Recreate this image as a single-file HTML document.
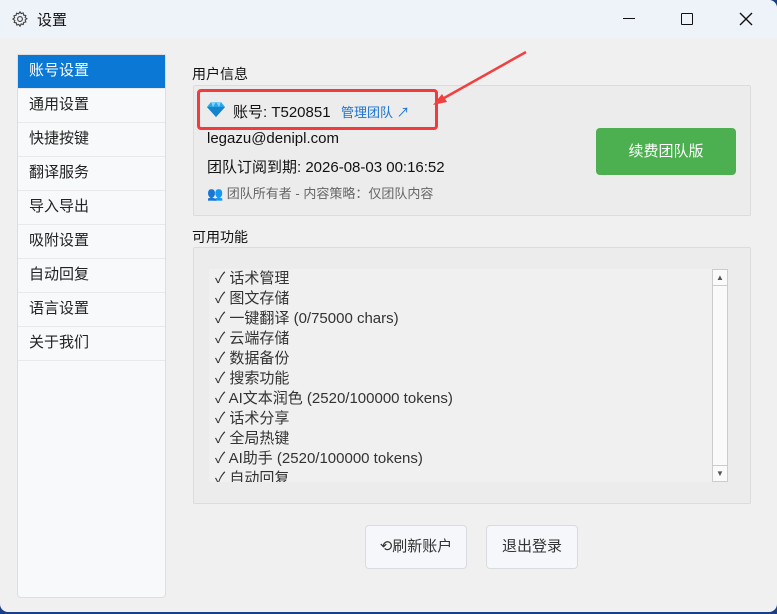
<!DOCTYPE html>
<html><head><meta charset="utf-8"><style>
*{margin:0;padding:0;box-sizing:border-box}
body{width:777px;height:614px;background:#1a3f8a;font-family:"Liberation Sans","Noto Sans CJK SC",sans-serif;overflow:hidden;position:relative}
.win{position:absolute;left:0;top:0;width:777px;height:612px;background:#f0f0f0;border-radius:0 8px 8px 8px;overflow:hidden}
.tb{position:absolute;left:0;top:0;width:777px;height:38px;background:#eef2f9}
.tb .t{position:absolute;left:37px;top:9px;font-size:15px;color:#111}
.side{position:absolute;left:17px;top:54px;width:149px;height:544px;background:#f8f9fb;border:1px solid #dedede;border-radius:0 0 4px 4px}
.it{height:34px;line-height:32px;padding-left:11px;font-size:15px;color:#222;border-bottom:1px solid #e9e9e9}
.it.sel{background:#0a78d4;color:#fff}
.a{position:absolute}
.lbl{font-size:14px;color:#111}
.box{background:#ececec;border:1px solid #dcdcdc;border-radius:2px}
.btn{background:#f5f7fb;border:1px solid #d9dbe0;border-radius:4px;font-size:15px;color:#333;text-align:center}
.list div{height:20px;line-height:20px;font-size:15px;color:#333}
</style></head><body>
<div class="win">
<div class="tb">
<svg class="a" style="left:11px;top:10px" width="18" height="18" viewBox="0 0 24 24" fill="none" stroke="#444" stroke-width="1.5"><circle cx="12" cy="12" r="3.2"/><path d="M12 2.5l1.6 2.3 2.7-.8.6 2.8 2.8.6-.8 2.7 2.3 1.6-2.3 1.6.8 2.7-2.8.6-.6 2.8-2.7-.8L12 21.5l-1.6-2.3-2.7.8-.6-2.8-2.8-.6.8-2.7L2.5 12l2.3-1.6-.8-2.7 2.8-.6.6-2.8 2.7.8z"/></svg>
<div class="t">设置</div>
<div class="a" style="left:623px;top:18px;width:12px;height:1px;background:#111"></div>
<div class="a" style="left:681px;top:13px;width:12px;height:12px;border:1.5px solid #111;border-radius:1px"></div>
<svg class="a" style="left:739px;top:12px" width="14" height="14" viewBox="0 0 14 14" stroke="#111" stroke-width="1.4"><path d="M1 1L13 13M13 1L1 13"/></svg>
</div>
<div class="side">
<div class="it sel">账号设置</div><div class="it">通用设置</div><div class="it">快捷按键</div><div class="it">翻译服务</div><div class="it">导入导出</div><div class="it">吸附设置</div><div class="it">自动回复</div><div class="it">语言设置</div><div class="it">关于我们</div>
</div>
<div class="a lbl" style="left:192px;top:64px">用户信息</div>
<div class="a box" style="left:193px;top:85px;width:558px;height:131px"></div>
<div class="a" style="left:197px;top:89px;width:241px;height:41px;border:3px solid #f03c3c;border-radius:4px"></div>
<svg class="a" style="left:430px;top:48px" width="100" height="60"><path d="M7 54L96 4" stroke="#f04040" stroke-width="2.5"/><path d="M3 57l14-3-5-8z" fill="#f04040"/></svg>
<svg class="a" style="left:207px;top:101px" width="18" height="16" viewBox="0 0 18 16"><path d="M4 1h10l4 5-9 10-9-10z" fill="#2aa6e8"/><path d="M0 6h18L9 16z" fill="#1484cc"/><path d="M4 1l2 5 3-5 3 5 2-5" fill="#7fd4fb"/></svg>
<div class="a" style="left:233px;top:101px;font-size:15px;color:#111">账号: T520851</div>
<div class="a" style="left:341px;top:102px;font-size:13px;color:#1a73d0">管理团队 ↗</div>
<div class="a" style="left:207px;top:130px;font-size:15px;color:#111">legazu@denipl.com</div>
<div class="a" style="left:207px;top:156px;font-size:15px;color:#111">团队订阅到期: 2026-08-03 00:16:52</div>
<div class="a" style="left:207px;top:183px;font-size:13px;color:#666"><span style="color:#4a3a5a">👥</span> 团队所有者 - 内容策略：仅团队内容</div>
<div class="a" style="left:596px;top:128px;width:140px;height:47px;background:#4caf50;border-radius:4px;color:#fff;font-size:15px;line-height:47px;text-align:center">续费团队版</div>
<div class="a lbl" style="left:192px;top:227px">可用功能</div>
<div class="a box" style="left:193px;top:247px;width:558px;height:257px"></div>
<div class="a list" style="left:209px;top:269px;width:503px;height:213px;background:#f0f0f0;overflow:hidden;padding-left:6px">
<div>✓ 话术管理</div><div>✓ 图文存储</div><div>✓ 一键翻译 (0/75000 chars)</div><div>✓ 云端存储</div><div>✓ 数据备份</div><div>✓ 搜索功能</div><div>✓ AI文本润色 (2520/100000 tokens)</div><div>✓ 话术分享</div><div>✓ 全局热键</div><div>✓ AI助手 (2520/100000 tokens)</div><div>✓ 自动回复</div>
</div>
<div class="a" style="left:712px;top:269px;width:16px;height:213px;background:#fafafa;border:1px solid #ccc">
<div style="height:16px;border-bottom:1px solid #ccc;text-align:center;font-size:8px;line-height:15px;color:#555">▲</div>
<div style="position:absolute;bottom:0;left:0;width:14px;height:16px;border-top:1px solid #ccc;text-align:center;font-size:8px;line-height:15px;color:#555">▼</div>
</div>
<div class="a btn" style="left:365px;top:525px;width:102px;height:44px;line-height:42px">⟲刷新账户</div>
<div class="a btn" style="left:486px;top:525px;width:92px;height:44px;line-height:42px">退出登录</div>
</div>
</body></html>
